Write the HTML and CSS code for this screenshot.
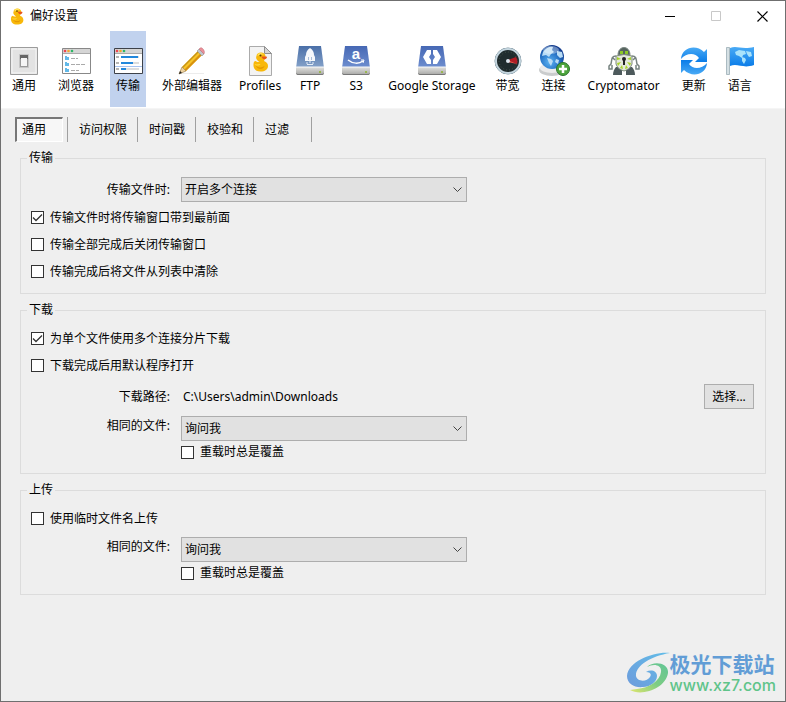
FILE: index.html
```
<!DOCTYPE html>
<html lang="zh-CN">
<head>
    <meta charset="utf-8">
    <meta name="viewport" content="width=device-width, initial-scale=1.0">
    <title>偏好设置</title>
    <link rel="stylesheet" href="styles.css">
</head>
<body>
    <!-- shared gradients and shapes -->
    <svg class="defs" width="0" height="0" aria-hidden="true">
        <defs>
            <linearGradient id="driveBlue" x1="0" y1="0" x2="0" y2="1">
                <stop offset="0" stop-color="#4668b4"/>
                <stop offset="1" stop-color="#6f8fd0"/>
            </linearGradient>
            <linearGradient id="driveSteel" x1="0" y1="0" x2="0" y2="1">
                <stop offset="0" stop-color="#4a6fa8"/>
                <stop offset="1" stop-color="#86a3ca"/>
            </linearGradient>
            <linearGradient id="driveBase" x1="0" y1="0" x2="0" y2="1">
                <stop offset="0" stop-color="#e2e2e0"/>
                <stop offset="1" stop-color="#a5a5a3"/>
            </linearGradient>
            <linearGradient id="blueFace" x1="0" y1="0" x2="0" y2="1">
                <stop offset="0" stop-color="#49aaf5"/>
                <stop offset="1" stop-color="#0a7ce8"/>
            </linearGradient>
            <radialGradient id="globeFace" cx="0.4" cy="0.7" r="0.7">
                <stop offset="0" stop-color="#5db4f3"/>
                <stop offset="0.6" stop-color="#2470c4"/>
                <stop offset="1" stop-color="#123a8c"/>
            </radialGradient>
            <linearGradient id="swirlBlue" x1="0" y1="1" x2="1" y2="0">
                <stop offset="0" stop-color="#6d9bdc"/>
                <stop offset="1" stop-color="#62bde8"/>
            </linearGradient>
            <linearGradient id="swirlGreen" x1="0" y1="1" x2="1" y2="0">
                <stop offset="0" stop-color="#dfe66e"/>
                <stop offset="0.5" stop-color="#7ccc84"/>
                <stop offset="1" stop-color="#62c596"/>
            </linearGradient>
            <symbol id="duck" viewBox="0 0 16 20">
                <path d="M1 12c0-2 1-3 2-3 1 1 3 1 4 1-3-2-4-4-3-6 0-2 2-3.500 4.500-3.500S13 2 13 4.500c0 2-1 3-1.500 4.500 3 1 4 3 4 5 0 3.500-3 5.500-7.500 5.500S.5 17 1 12z" fill="#f8b80a"/>
                <path d="M5 4c0-2 1-3 3-3s3 1 3 2c-2-1-4 0-6 1z" fill="#ffe45a"/>
                <path d="M3 13c2 3 6 3 9 1 0 3-7 5-9-1z" fill="#e59a00"/>
                <path d="M2 12c1 1 4 0 6 0-1 2-5 2-6 0z" fill="#ffdc45"/>
                <path d="M9 4.500l5 0c1 1 0 2-1 2.500-2 1-4-1-4-2.500z" fill="#e9551a"/>
                <circle cx="8" cy="3.500" r="1" fill="#5a3b05"/>
            </symbol>
            <symbol id="drive" viewBox="0 0 32 32">
                <path d="M5 1h22l3 22H2z"/>
                <path d="M2 22h28v6q0 2-2 2H4q-2 0-2-2z" fill="url(#driveBase)"/>
                <path d="M2 22h28" stroke="#f8f8f8" fill="none"/>
                <path d="M2.500 28.500q0 1 1.500 1h24q1.500 0 1.500-1" stroke="#777" fill="none"/>
                <circle cx="26" cy="27" r="1" fill="#8eb52c"/>
            </symbol>
        </defs>
    </svg>

    <header class="titlebar">
        <svg class="app-icon" width="14" height="17"><use href="#duck"/></svg>
        <span class="title">偏好设置</span>
        <div class="window-buttons">
            <button type="button" aria-label="最小化"><svg width="11" height="11"><path d="M0 5.500h10" stroke="#000"/></svg></button>
            <button type="button" aria-label="最大化" disabled><svg width="11" height="11"><path d="M.5 .5h9v9h-9z" stroke="#c8c8c8" fill="none"/></svg></button>
            <button type="button" aria-label="关闭"><svg width="11" height="11"><path d="M.5 .5l10 10M10.500 .5l-10 10" stroke="#000" stroke-width="1.200"/></svg></button>
        </div>
    </header>

    <nav class="toolbar">
        <a class="tool" href="#general">
            <svg viewBox="0 0 32 32">
                <path d="M2.500 2.500h27v27h-27z" fill="#e3e3e3" stroke="#9c9c9c"/>
                <path d="M4 4h24v24H4z" fill="none" stroke="#f6f6f6"/>
                <path d="M11.500 9.500h9v13h-9z" fill="#999" stroke="#c6c6c6"/>
                <path d="M12 10h8v4h-8z" fill="#666"/>
                <path d="M13 13h6v8h-6z" fill="#f5f5f5"/>
            </svg>
            <span>通用</span>
        </a>
        <a class="tool" href="#browser">
            <svg viewBox="0 0 32 32">
                <path d="M2.500 3.500h28v25h-28z" fill="#fff" stroke="#888"/>
                <path d="M3 4h27v4H3z" fill="#d5d5d5"/>
                <path d="M3 8.500h27" stroke="#aaa"/>
                <circle cx="5" cy="6" r="1.300" fill="#ef4550"/><circle cx="8.500" cy="6" r="1.300" fill="#f5a72d"/><circle cx="12" cy="6" r="1.300" fill="#2eb766"/>
                <path d="M5 11h2v1h2v3H5zM5 17h2v1h2v3H5zM5 23h2v1h2v3H5z" fill="#62b9e8"/>
                <path d="M11 13.500h7M11 19.500h15M11 25.500h8" stroke="#aaa" stroke-dasharray="4 1"/>
            </svg>
            <span>浏览器</span>
        </a>
        <a class="tool active" href="#transfers">
            <svg viewBox="0 0 32 32">
                <path d="M2.500 3.500h28v25h-28z" fill="#fff" stroke="#3d4149"/>
                <path d="M3 4h27v4H3z" fill="#d5d5d5"/>
                <path d="M3 8.500h27" stroke="#aaa"/>
                <circle cx="5" cy="6" r="1.300" fill="#ef4550"/><circle cx="8.500" cy="6" r="1.300" fill="#f5a72d"/><circle cx="12" cy="6" r="1.300" fill="#2eb766"/>
                <path d="M9 11h18v2H9zM9 17h18v2H9zM9 23h18v2H9z" fill="#ddd"/>
                <path d="M9 11h17v2H9zM9 17h12v2H9zM9 23h5v2H9z" fill="#2388dc"/>
                <path d="M4 12h3M4 18h3M4 24h3" stroke="#b5b5b5" stroke-width="2"/>
                <path d="M3 21.500h27" stroke="#a9c3ef"/>
            </svg>
            <span>传输</span>
        </a>
        <a class="tool" href="#editor">
            <svg viewBox="0 0 32 32">
                <path d="M5 28.500h23" stroke="#ececec"/>
                <path d="M6 22L22 6l4 4L10 26z" fill="#f7c528"/>
                <path d="M8.500 24.500L24.500 8.500l1.500 1.500L10 26z" fill="#d8920f"/>
                <path d="M6 22L22 6l1 1L7 23z" fill="#c79316"/>
                <path d="M6 22l-3 7 7-3z" fill="#edd2a0" stroke="#94733c" stroke-width=".6"/>
                <path d="M3 29l1-3 2 2z" fill="#222"/>
                <path d="M21 6l2-2 5 5-2 2z" fill="#bfc5cc" stroke="#888" stroke-width=".5"/>
                <path d="M23 4c2-2 3-1 4 0s2 3 1 5z" fill="#ec9099" stroke="#b76b75" stroke-width=".5"/>
            </svg>
            <span>外部编辑器</span>
        </a>
        <a class="tool tight" href="#profiles">
            <svg viewBox="0 0 32 32">
                <path d="M5.500 1.500h15l7 7v22h-22z" fill="#f3f3f3" stroke="#ababab"/>
                <path d="M20.500 1.500v7h7z" fill="#d4d4d4" stroke="#909090"/>
                <use href="#duck" x="8" y="7" width="17" height="20"/>
            </svg>
            <span>Profiles</span>
        </a>
        <a class="tool" href="#ftp">
            <svg viewBox="0 0 32 32">
                <use href="#drive" fill="url(#driveSteel)"/>
                <path d="M16 3c3 2 4 4 4 7l1 2v4H11v-4l1-2c0-3 1-5 4-7z" fill="#f5f8fb"/>
                <path d="M14.500 12v3M17.500 12v3" stroke="#a9bdd8" fill="none"/>
                <path d="M12 18h2M18 18h2M15 17h2M13 19.500h6" stroke="#e4edf7"/>
            </svg>
            <span>FTP</span>
        </a>
        <a class="tool" href="#s3">
            <svg viewBox="0 0 32 32">
                <use href="#drive" fill="url(#driveBlue)"/>
                <text class="drive-letter" x="16" y="14" text-anchor="middle">a</text>
                <path d="M8 15c5 4 11 4 15 1" stroke="#fff" stroke-width="1.500" fill="none"/>
                <path d="M21 15h3l-1 3" stroke="#fff" fill="none"/>
            </svg>
            <span>S3</span>
        </a>
        <a class="tool wide" href="#google">
            <svg viewBox="0 0 32 32">
                <use href="#drive" fill="url(#driveBlue)"/>
                <path d="M11 5h4v4l-2 3 2 3v4h-4l-4-7zM21 5h-4v4l2 3-2 3v4h4l4-7z" fill="#fff"/>
            </svg>
            <span>Google Storage</span>
        </a>
        <a class="tool" href="#bandwidth">
            <svg viewBox="0 0 32 32">
                <circle cx="16" cy="16" r="13" fill="#202c2e" stroke="#718a98"/>
                <circle cx="16" cy="16" r="12" fill="none" stroke="#c5d6df" stroke-width="2"/>
                <circle cx="16" cy="16" r="9" fill="none" stroke="#46564f" stroke-dasharray="1 2"/>
                <path d="M16 15l8-3c1 2 2 4 1 7z" fill="#b21d25"/>
                <path d="M16 15l9 4-9-2z" fill="#ff5146"/>
                <circle cx="16" cy="16" r="2" fill="#dce7ef"/>
            </svg>
            <span>带宽</span>
        </a>
        <a class="tool" href="#connection">
            <svg viewBox="0 0 32 32">
                <ellipse cx="14" cy="25" rx="13" ry="6" fill="#cacccd"/>
                <ellipse cx="14" cy="23" rx="12" ry="5" fill="#ececec"/>
                <circle cx="14" cy="12" r="12" fill="url(#globeFace)"/>
                <path d="M5 7c3-5 8-6 10-5l-1 3 2 2-3 2-2 3-3-2-4 1zM9 13l4 1 2 2-2 5-2-3zM19 6l5 1 1 5-3 1-3-3zM18 14l3 1-1 4-3-2z" fill="#b9dcf5"/>
                <ellipse cx="13" cy="5" rx="8" ry="4" fill="#fff" opacity=".35"/>
                <circle cx="25" cy="24" r="6.500" fill="#4da43c" stroke="#2b742d"/>
                <path d="M25 20v8M21 24h8" stroke="#fff" stroke-width="2.500"/>
            </svg>
            <span>连接</span>
        </a>
        <a class="tool" href="#cryptomator">
            <svg viewBox="0 0 32 32">
                <path d="M8 11c-5 0-4 4-5 8l-2 2v3h3v-4M24 11c5 0 4 4 5 8l2 2v3h-3v-4M4 12l3 3M28 12l-3 3" fill="none" stroke="#76827f" stroke-width="1.500"/>
                <path d="M8 22h6v8H5c0-3 1-6 3-8zM24 22h-6v8h9c0-3-1-6-3-8z" fill="#4d5a5c"/>
                <path d="M10 10c0-10 12-10 12 0z" fill="#56645f" stroke="#7e8b86"/>
                <path d="M12 6h3v3h-3zM17 6h3v3h-3z" fill="#8bc825"/>
                <path d="M8 11q8-3 16 0v8c-1 4-5 6-8 7-3-1-7-3-8-7z" fill="#e4e8dc" stroke="#7c8a7c"/>
                <path d="M9 18l4-1-3 4zM23 18l-4-1 3 4zM12 23l2-3 1 4zM20 23l-2-3-1 4zM9 12l4 2-4 1zM23 12l-4 2 4 1z" fill="#a7d427"/>
                <circle cx="16" cy="14" r="2" fill="#222"/>
                <path d="M16 14v6" stroke="#222" stroke-width="2"/>
            </svg>
            <span>Cryptomator</span>
        </a>
        <a class="tool" href="#update">
            <svg viewBox="0 0 32 32" fill="url(#blueFace)">
                <path id="updateArrow" d="M3 14C4 2 18-1 26 7l3-3v13H17l4-4C17 7 8 8 3 14z"/>
                <use href="#updateArrow" transform="rotate(180 16 16)"/>
            </svg>
            <span>更新</span>
        </a>
        <a class="tool" href="#language">
            <svg viewBox="0 0 32 32">
                <path d="M2.500 2.500h3v27h-3z" fill="#d5e0e4" stroke="#8fa4ae" stroke-width=".7"/>
                <path d="M6 3c7-3 11 2 24-1v18c-11 4-16-2-24 1z" fill="url(#blueFace)"/>
                <path d="M11 7l4-2 6 1 1 3-3 1-1 3-3-2-3-1zM18 12l3 1 1 2-2 4-2-3zM22 6l5 1 1 4-3 1-2-3z" fill="#a8e2fb"/>
            </svg>
            <span>语言</span>
        </a>
    </nav>

    <main class="content">
        <nav class="tabs">
            <button type="button" class="tab selected">通用</button>
            <button type="button" class="tab">访问权限</button>
            <button type="button" class="tab">时间戳</button>
            <button type="button" class="tab">校验和</button>
            <button type="button" class="tab">过滤</button>
        </nav>

        <form class="groups">
            <fieldset>
                <legend>传输</legend>
                <div class="row first">
                    <label class="name" for="transferMode">传输文件时:</label>
                    <select id="transferMode"><option>开启多个连接</option></select>
                </div>
                <label class="check"><input type="checkbox" checked>传输文件时将传输窗口带到最前面</label>
                <label class="check"><input type="checkbox">传输全部完成后关闭传输窗口</label>
                <label class="check"><input type="checkbox">传输完成后将文件从列表中清除</label>
            </fieldset>

            <fieldset class="compact">
                <legend>下载</legend>
                <label class="check"><input type="checkbox" checked>为单个文件使用多个连接分片下载</label>
                <label class="check"><input type="checkbox">下载完成后用默认程序打开</label>
                <div class="row">
                    <span class="name">下载路径:</span>
                    <span class="path">C:\Users\admin\Downloads</span>
                    <button type="button" class="choose">选择...</button>
                </div>
                <div class="row top">
                    <label class="name" for="downloadExists">相同的文件:</label>
                    <select id="downloadExists"><option>询问我</option></select>
                </div>
                <label class="check indented"><input type="checkbox">重载时总是覆盖</label>
            </fieldset>

            <fieldset class="compact">
                <legend>上传</legend>
                <label class="check"><input type="checkbox">使用临时文件名上传</label>
                <div class="row top">
                    <label class="name" for="uploadExists">相同的文件:</label>
                    <select id="uploadExists"><option>询问我</option></select>
                </div>
                <label class="check indented"><input type="checkbox">重载时总是覆盖</label>
            </fieldset>
        </form>
    </main>

    <div class="watermark">
        <svg width="44" height="42" viewBox="0 0 44 42">
            <path d="M43 1C28-1 1 9 0 24c0 8 8 12 16 11 7 0 14-5 14-11 0-5-6-7-11-4 4 0 6 2 4 5-3 5-13 5-14-1C8 14 24 4 43 1z" fill="url(#swirlBlue)"/>
            <path d="M20 15c7-4 15-2 14 5-1 9-12 16-24 17l-7 1c12 7 36-2 38-17 1-10-14-13-21-6z" fill="url(#swirlGreen)"/>
        </svg>
        <div class="watermark-text">
            <span class="watermark-name">极光下载站</span>
            <span class="watermark-url">www.xz7.com</span>
        </div>
    </div>
</body>
</html>
```

FILE: styles.css
```
* {
    box-sizing: border-box;
}
body {
    margin: 0;
    min-height: 100vh;
    border: 1px solid #6f6f6f;
    background: #efefef;
    color: #000;
    font-family: "Noto Sans", "Noto Sans CJK SC", sans-serif;
    font-size: 12px;
    line-height: 16px;
}
button, select, input {
    font: inherit;
    color: inherit;
    margin: 0;
}
.defs {
    position: absolute;
}

/* title bar */
.titlebar {
    display: flex;
    align-items: center;
    height: 30px;
    padding-left: 9px;
    background: #fff;
}
.title {
    margin-left: 6px;
}
.window-buttons {
    display: flex;
    height: 100%;
    margin-left: auto;
}
.window-buttons button {
    display: flex;
    align-items: center;
    justify-content: center;
    width: 46px;
    padding: 0;
    border: none;
    background: none;
}

/* toolbar */
.toolbar {
    display: flex;
    gap: 10px;
    height: 78px;
    padding: 0 5px 1px;
    background: #fff;
    border-bottom: 1px solid #f5f5f5;
}
.tool {
    display: flex;
    flex-direction: column;
    align-items: center;
    gap: 1px;
    min-width: 36px;
    padding: 14px 6px 0;
    color: #000;
    text-decoration: none;
    white-space: nowrap;
}
.tool.tight {
    padding-left: 1px;
    padding-right: 1px;
}
.tool.wide {
    padding-left: 4px;
    padding-right: 4px;
}
.tool.active {
    background: #c1d2ee;
}
.tool svg {
    width: 32px;
    height: 32px;
    margin: 0 -4px;
    flex: none;
}
.drive-letter {
    font: bold 15px "Liberation Sans", sans-serif;
    fill: #fff;
}

/* tabs */
.content {
    padding: 8px 19px 20px;
}
.tabs {
    display: flex;
    height: 25px;
    margin-left: -5px;
}
.tab {
    min-width: 58px;
    padding: 0 10px 0 11px;
    border: none;
    border-right: 1px solid #a0a0a0;
    background: none;
    text-align: left;
}
.tab.selected {
    min-width: 48px;
    margin-right: 4px;
    padding: 0 5px;
    border: 1px solid #fff;
    border-top: 2px solid #777;
    border-left: 2px solid #777;
    background: #f7f7f7;
}
.tab.selected + .tab {
    border-left: 1px solid #a0a0a0;
}

/* groups */
.groups {
    display: flex;
    flex-direction: column;
    gap: 8px;
    margin-top: 8px;
}
fieldset {
    min-width: 0;
    margin: 0;
    padding: 11px 11px 8px 10px;
    border: 1px solid #dcdcdc;
}
fieldset.compact {
    padding-top: 7px;
    padding-bottom: 10px;
}
legend {
    margin-left: -4px;
    padding: 0 2px;
}
.row {
    display: flex;
    align-items: center;
    gap: 11px;
    margin-top: 5px;
}
.row.first {
    margin: 0 0 2px;
}
.row.top {
    align-items: flex-start;
}
.row.top .name {
    padding-top: 2px;
}
.row + .row {
    margin-top: 7px;
}
.name {
    width: 139px;
    text-align: right;
}
.path {
    padding-left: 2px;
}
.choose {
    height: 25px;
    margin-left: auto;
    padding: 0 6px;
    min-width: 50px;
    border: 1px solid #adadad;
    background: #e1e1e1;
}
select {
    appearance: none;
    width: 286px;
    height: 25px;
    padding: 0 24px 0 3px;
    border: 1px solid #adadad;
    border-radius: 0;
    background: #e1e1e1 url("data:image/svg+xml,%3Csvg xmlns='http://www.w3.org/2000/svg' width='9' height='6'%3E%3Cpath d='M.5 .5l4 4 4-4' fill='none' stroke='%23444'/%3E%3C/svg%3E") no-repeat right 4px center;
}
.check {
    display: flex;
    align-items: center;
    gap: 6px;
    height: 27px;
}
.check.indented {
    height: 22px;
    margin-left: 150px;
}
.check input {
    appearance: none;
    width: 13px;
    height: 13px;
    border: 1px solid #333;
    background: #fff;
}
.check input:checked {
    background: #fff url("data:image/svg+xml,%3Csvg xmlns='http://www.w3.org/2000/svg' width='11' height='11'%3E%3Cpath d='M1 5.500l3 3 6-6' fill='none' stroke='%23333' stroke-width='1.300'/%3E%3C/svg%3E") no-repeat center;
}

/* site mark over the bottom right corner */
.watermark {
    position: absolute;
    right: 10px;
    bottom: 7px;
    display: flex;
    align-items: center;
}
.watermark-text {
    display: flex;
    flex-direction: column;
    margin-left: -1px;
}
.watermark-name {
    color: #629dd6;
    font: bold 21px/24px "Noto Sans CJK SC", sans-serif;
}
.watermark-url {
    color: #5fc48a;
    font: 500 16px/20px "Inter", "Liberation Sans", sans-serif;
}
```
